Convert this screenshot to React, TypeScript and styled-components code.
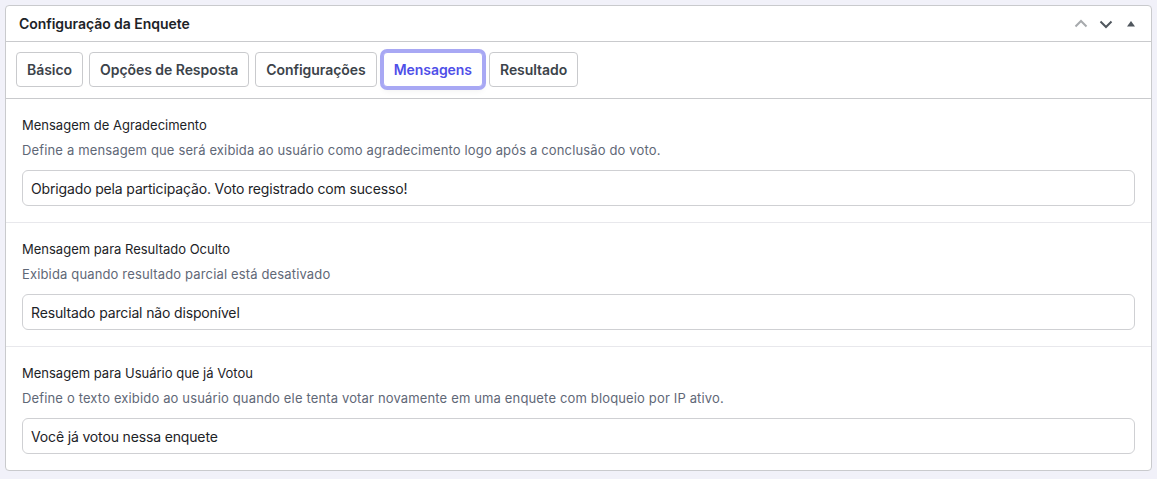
import styled, { createGlobalStyle } from 'styled-components';

const GlobalStyle = createGlobalStyle`
  html, body {
    margin: 0;
    padding: 0;
    background: #f1f1f9;
    font-family: Inter, "Noto Sans", "Liberation Sans", sans-serif;
    -webkit-font-smoothing: antialiased;
  }
`;

const Page = styled.div`
  padding: 5px 5px 8px;
`;

const Panel = styled.section`
  background: #fff;
  border: 1px solid #c9cacd;
  border-radius: 4px;
`;

const PanelHeader = styled.header`
  height: 35px;
  display: flex;
  align-items: center;
  justify-content: space-between;
  padding: 0 12px 0 13px;
  border-bottom: 1px solid #c9cacd;
`;

const PanelTitle = styled.h2`
  margin: 0;
  font-size: 14px;
  font-weight: 600;
  letter-spacing: -0.05px;
  color: #1d2327;
`;

const HeaderActions = styled.div`
  display: flex;
  align-items: center;
  gap: 8px;
`;

const IconButton = styled.span<{ $muted?: boolean }>`
  width: 17px;
  height: 17px;
  display: flex;
  align-items: center;
  justify-content: center;
  color: ${({ $muted }) => ($muted ? '#a7aaad' : '#50575e')};
`;

const Tabs = styled.nav`
  display: flex;
  gap: 6px;
  padding: 10px 10px 11px;
  border-bottom: 1px solid #c9cacd;
`;

const Tab = styled.button<{ $active?: boolean }>`
  height: 35px;
  padding: 0 10px;
  font-family: inherit;
  font-size: 14px;
  font-weight: 600;
  letter-spacing: -0.05px;
  color: ${({ $active }) => ($active ? '#4f4fe8' : '#3c434a')};
  background: #fff;
  border: 1px solid ${({ $active }) => ($active ? '#a8a8f4' : '#c9cacd')};
  border-radius: 4px;
  cursor: pointer;
  box-shadow: ${({ $active }) =>
    $active ? '0 0 0 3px #a8a8f4, 0 4px 6px rgba(0, 0, 0, 0.06)' : 'none'};
`;

const Field = styled.div`
  padding: 16px 16px 16px;
  border-bottom: 1px solid #e8e8ec;

  &:last-child {
    border-bottom: none;
  }
`;

const Label = styled.label`
  display: block;
  font-size: 13px;
  line-height: 20px;
  color: #1d2327;
`;

const Hint = styled.p`
  margin: 5px 0 10px;
  font-size: 13px;
  line-height: 20px;
  letter-spacing: 0.15px;
  color: #5f6877;
`;

const Input = styled.input`
  box-sizing: border-box;
  width: 100%;
  height: 36px;
  padding: 0 8px;
  font-family: inherit;
  font-size: 14px;
  letter-spacing: -0.15px;
  color: #1d2327;
  background: #fff;
  border: 1px solid #cfd0d3;
  border-radius: 6px;
  outline: none;
`;

const fields = [
  {
    label: 'Mensagem de Agradecimento',
    hint: 'Define a mensagem que será exibida ao usuário como agradecimento logo após a conclusão do voto.',
    value: 'Obrigado pela participação. Voto registrado com sucesso!',
  },
  {
    label: 'Mensagem para Resultado Oculto',
    hint: 'Exibida quando resultado parcial está desativado',
    value: 'Resultado parcial não disponível',
  },
  {
    label: 'Mensagem para Usuário que já Votou',
    hint: 'Define o texto exibido ao usuário quando ele tenta votar novamente em uma enquete com bloqueio por IP ativo.',
    value: 'Você já votou nessa enquete',
  },
];

const tabs = ['Básico', 'Opções de Resposta', 'Configurações', 'Mensagens', 'Resultado'];

export default function App() {
  return (
    <Page>
      <GlobalStyle />
      <Panel>
        <PanelHeader>
          <PanelTitle>Configuração da Enquete</PanelTitle>
          <HeaderActions>
            <IconButton $muted>
              <svg width="14" height="14" viewBox="0 0 14 14" fill="none" stroke="currentColor" strokeWidth="2">
                <path d="M1.5 9.5 7 4l5.5 5.5" />
              </svg>
            </IconButton>
            <IconButton>
              <svg width="14" height="14" viewBox="0 0 14 14" fill="none" stroke="currentColor" strokeWidth="2">
                <path d="M1.5 4.5 7 10l5.5-5.5" />
              </svg>
            </IconButton>
            <IconButton>
              <svg width="10" height="10" viewBox="0 0 10 10" fill="currentColor">
                <path d="M5 2 9 7.5H1z" />
              </svg>
            </IconButton>
          </HeaderActions>
        </PanelHeader>
        <Tabs>
          {tabs.map((tab) => (
            <Tab key={tab} $active={tab === 'Mensagens'}>
              {tab}
            </Tab>
          ))}
        </Tabs>
        {fields.map((field) => (
          <Field key={field.label}>
            <Label>{field.label}</Label>
            <Hint>{field.hint}</Hint>
            <Input defaultValue={field.value} />
          </Field>
        ))}
      </Panel>
    </Page>
  );
}
